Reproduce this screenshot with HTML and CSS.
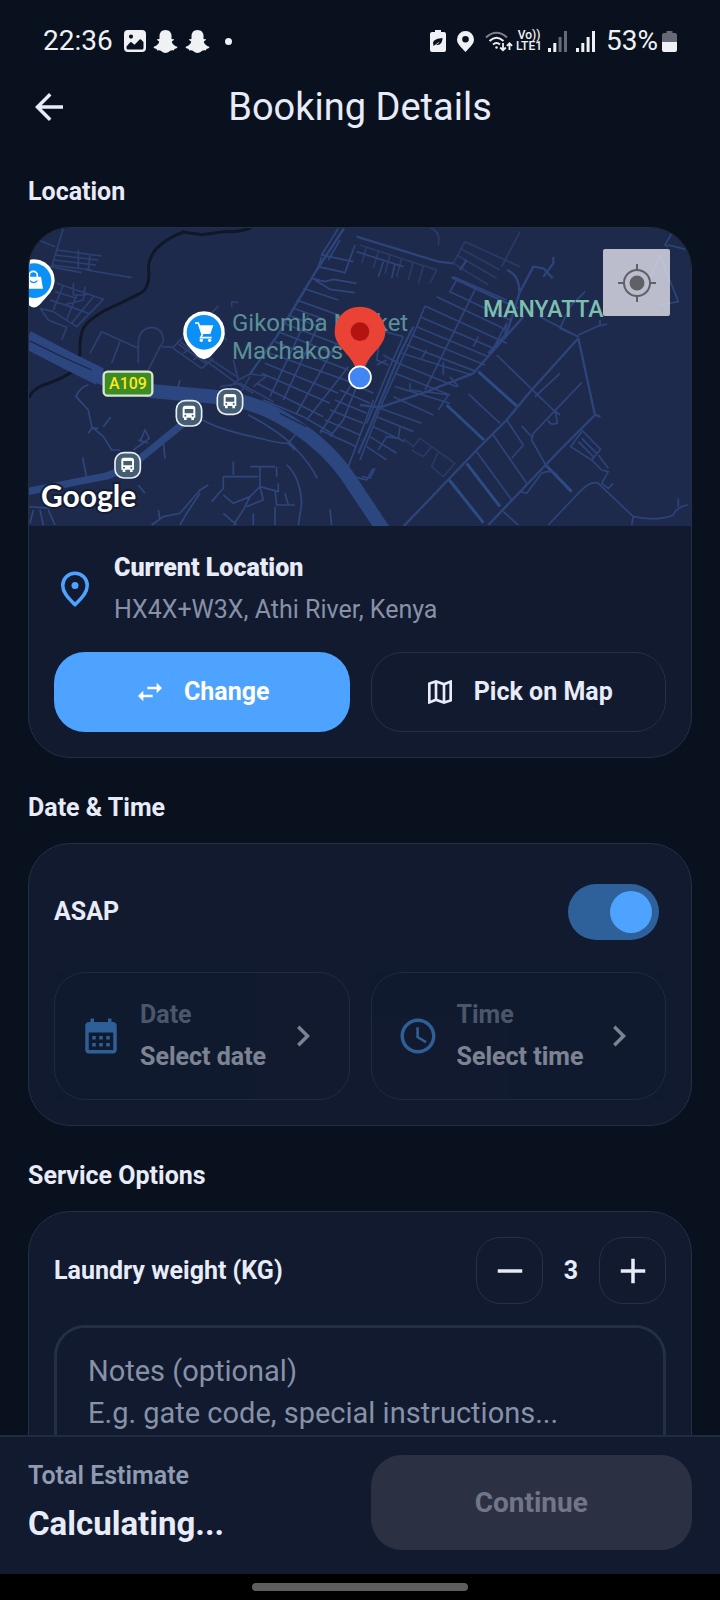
FILE: index.html
```html
<!DOCTYPE html>
<html lang="en">
<head>
<meta charset="utf-8">
<meta name="viewport" content="width=device-width, initial-scale=1">
<title>Booking Details</title>
<link rel="stylesheet" href="styles.css">
</head>
<body>
<div class="app">
  <div class="status">
    <div class="status-group">
      <span class="clock">22:36</span>
      <svg class="ic-photo" width="22" height="22" viewBox="0 0 22 22"><path fill-rule="evenodd" fill="currentColor" d="M4 0h14a4 4 0 0 1 4 4v14a4 4 0 0 1-4 4H4a4 4 0 0 1-4-4V4a4 4 0 0 1 4-4zM7 4.500a2 2 0 1 0 0 4.200a2 2 0 0 0 0-4.200zM2.500 16.500v1.500q0 1.500 1.500 1.500h14q1.500 0 1.500-1.500v-6l-2.500-2.500q-.7-.6-1.400 0l-5.100 5.200-3-2.400q-.8-.5-1.500.2z"/></svg>
      <svg class="ic-ghost" width="25" height="23" viewBox="0 0 25 23"><path fill="currentColor" d="M12.500 0C16.500 0 18.500 2.800 18.500 6v3c.8.400 2-.3 2.300.5.300.9-1.800 1.300-2 2.200 0 1.500 2.500 4 4.900 4.800 1 .4.900 1.300-.1 1.800-1 .5-2 .4-2.400 1.100-.3.800-.3 1-1.200 1-1.300-.1-2.400 0-3.500.9-2.500 2.100-5.500 2.100-8 0-1.100-.9-2.200-1-3.500-.9-.9 0-.9-.2-1.200-1-.4-.7-1.400-.6-2.400-1.100-1-.5-1.100-1.400-.1-1.800 2.400-.8 4.900-3.300 4.900-4.800-.2-.9-2.300-1.300-2-2.200.300-.8 1.500-.1 2.300-.5V6c0-3.200 2-6 6-6z"/></svg>
      <svg class="ic-ghost" width="25" height="23" viewBox="0 0 25 23"><path fill="currentColor" d="M12.500 0C16.500 0 18.500 2.800 18.500 6v3c.8.400 2-.3 2.300.5.300.9-1.800 1.300-2 2.200 0 1.500 2.500 4 4.900 4.800 1 .4.900 1.300-.1 1.800-1 .5-2 .4-2.400 1.100-.3.800-.3 1-1.200 1-1.300-.1-2.400 0-3.500.9-2.500 2.100-5.500 2.100-8 0-1.100-.9-2.200-1-3.500-.9-.9 0-.9-.2-1.200-1-.4-.7-1.400-.6-2.400-1.100-1-.5-1.100-1.400-.1-1.800 2.400-.8 4.900-3.300 4.900-4.800-.2-.9-2.300-1.300-2-2.200.300-.8 1.500-.1 2.300-.5V6c0-3.200 2-6 6-6z"/></svg>
      <span class="more-dot"></span>
    </div>
    <div class="status-group status-right">
      <svg width="16" height="22" viewBox="0 0 16 22"><path fill="currentColor" d="M5 0h6v2h3q2 0 2 2v16q0 2-2 2H2q-2 0-2-2V4q0-2 2-2h3z"/><path fill="#0a111e" d="M3 12.500c1-3 5-4 9.500-4.500 0 5-3 8-6.500 6.500 1.500-.5 3-1.500 3.500-3-1.500 1.500-3.500 2.500-6 4.500z"/></svg>
      <svg class="ic-pin" width="17" height="21" viewBox="0 0 17 21"><path fill="currentColor" fill-rule="evenodd" d="M8.500 0A8.500 8.500 0 0 1 17 8.500C17 13 13 16 8.500 21 4 16 0 13 0 8.500A8.500 8.500 0 0 1 8.500 0zM8.500 5a3.300 3.300 0 1 0 0 6.600a3.300 3.300 0 0 0 0-6.600z"/></svg>
      <svg class="ic-wifi" width="28" height="21" viewBox="0 0 28 21" fill="none" stroke="currentColor" stroke-width="2"><path opacity=".5" d="M1 6.500Q11.500-3 22 6.500"/><path d="M4.500 10Q11.500 3.500 18.500 10M8 13.500q3.500-3 7 0"/><circle cx="11.500" cy="16.500" r="1.200" fill="currentColor" stroke="none"/><path stroke-width="1.800" d="M18 12v7m-2.800-2.500L18 19.300l2.800-2.800M24.500 19v-6.500m-2.600 2.300l2.600-2.600 2.600 2.600"/></svg>
      <span class="volte"><span>Vo))</span><span>LTE1</span></span>
      <svg class="ic-sig" width="19" height="21" viewBox="0 0 19 21" fill="currentColor"><path d="M0 17h3v4H0zM5.300 12h3v9h-3z"/><path opacity=".4" d="M10.600 6h3v15h-3zM16 0h3v21h-3z"/></svg>
      <svg class="ic-sig2" width="19" height="21" viewBox="0 0 19 21" fill="currentColor"><path d="M0 17h3v4H0zM5.300 12h3v9h-3zM10.600 6h3v15h-3zM16 0h3v21h-3z"/></svg>
      <span class="clock">53%</span>
      <svg class="ic-bat" width="15" height="21" viewBox="0 0 15 21"><path opacity=".4" fill="currentColor" d="M4.500 0h6v2H13q2 0 2 2v7H0V4q0-2 2-2h2.500z"/><path fill="currentColor" d="M0 11h15v8q0 2-2 2H2q-2 0-2-2z"/></svg>
    </div>
  </div>

  <header class="topbar">
    <button class="icon-btn" type="button" aria-label="Back"><svg class="i42" viewBox="0 0 24 24" fill="currentColor"><path d="M20 11H7.830l5.590-5.590L12 4l-8 8 8 8 1.410-1.410L7.830 13H20v-2z"/></svg></button>
    <h1>Booking Details</h1>
  </header>

  <main class="content">
    <section>
      <h2>Location</h2>
      <div class="card">
        <div class="map">
          <svg class="map-art" viewBox="0 0 662 298" role="img" aria-label="Map around Athi River">
            <defs>
              <g id="bus">
                <rect x="-38" y="-38" width="76" height="76" rx="27" fill="#465e74" stroke="#e9eef2" stroke-width="5"/>
                <path fill="#fff" fill-rule="evenodd" d="M-11-23h22q8 0 8 8v28h-4v7h-8v-7H-7v7h-8v-7h-4v-28q0-8 8-8zM-13-13v13h26v-13zM-11 4a3 3 0 1 0 0 6a3 3 0 0 0 0-6zM11 4a3 3 0 1 0 0 6a3 3 0 0 0 0-6z"/>
              </g>
            </defs>
            <rect width="662" height="298" fill="#1d2a4c"/>
            <g transform="translate(-9 -8) scale(.3333)" fill="none" stroke-linejoin="round">
              <g stroke="#2b4071" stroke-width="5">
                <path d="M20 45L105 80M130 25L95 140M110 90L245 108M105 105L235 120M100 120L228 135M95 135L215 150M175 90V145M210 105L205 148M90 140L185 158M200 150L335 173"/>
                <path d="M110 190L250 238L170 320L100 275L60 265M130 195L100 270M160 190V225L200 225M195 200L190 240L130 255M90 240L150 260L205 280M170 225L140 300M220 230L155 310M105 215L170 235M60 265L85 300L140 322L125 360"/>
                <path d="M245 335L210 400M245 335L355 385M300 365L275 430M355 430V365Q360 325 395 322Q430 325 430 365L420 380L385 450M425 380L460 382L480 360L540 315L595 258M635 262V245L655 248"/>
                <path d="M460 385L545 445L580 415M475 372L560 432M490 400L510 385M520 420L540 405M480 365L650 490L700 520M560 410L650 470M600 340L620 360"/>
                <path d="M640 420L655 480L630 500M655 480L690 462L740 468L700 500M660 520L690 470M600 500L660 490L760 545"/>
              </g>
              <g stroke="#2e467c" stroke-width="5">
                <path stroke-width="7" d="M972 25L890 150L770 350L690 462"/>
                <path d="M955 25L905 105L1000 125"/>
                <path d="M905 110L895 140L975 158L1005 75M925 120L960 60M875 175L915 185L940 178L1010 190M885 180L930 208L1005 218M850 205L955 240M830 240L1010 305M820 265L905 295M805 285L900 322M790 310L960 375M775 335L940 400M765 365L985 450M750 400L975 480M735 430L955 520M725 460L930 550M710 490L910 590"/>
                <path d="M865 285L750 530M905 295L790 540M950 370L830 580M985 440L860 600M1010 470L900 640M730 540L850 590L935 640"/>
                <path d="M975 480L1060 520M960 510L1050 550M945 540L1040 580M930 570L1030 610M915 600L1020 645M900 630L1010 680"/>
                <path d="M1060 380L1010 500L970 600L930 650M1060 540L1000 700L985 740"/>
                <path d="M548 600Q600 630 720 655Q780 672 805 670L830 640M685 585Q790 640 830 690Q870 730 892 775M805 670L825 690"/>
                <path d="M480 480L472 510M205 495Q180 500 168 530L205 570L215 620L250 650L275 690L300 690M205 640L215 625L235 625M250 620L272 592M355 660L385 670M360 665L375 630L388 655L340 690M430 665L435 715M188 712L200 775M355 795L375 820"/>
                <path d="M20 860L100 865M60 870L70 915M85 870L105 915M40 870L30 910"/>
                <path d="M395 915L430 890L480 880L540 810L565 795M415 870L420 900M540 820L500 880L480 915M575 845L610 805V770H715M640 725V765M690 740H765M720 740V800L775 815V790M770 740V770M720 800L690 830L670 870L640 915M690 830L640 850L610 825M680 860L730 840L720 800M610 880L650 915M765 810L770 855H825M765 860V915M700 880V915M800 735Q840 770 845 850L835 915M795 820L805 855M930 868L935 915M1000 770L1040 780L1060 745"/>
              </g>
              <path stroke="#101828" stroke-width="9" stroke-linecap="round" d="M690 25Q650 38 620 34L545 44L490 36Q440 55 410 85Q380 120 387 160Q388 200 365 218L290 255Q210 290 190 325Q178 350 180 400L165 450Q120 480 70 495Q40 508 28 530"/>
              <path stroke="#2c467f" stroke-width="22" d="M500 602L370 708Q330 745 260 768L20 815"/>
              <path stroke="#2c467f" stroke-width="54" d="M20 358L150 425L240 470"/>
              <path stroke="#2c467f" stroke-width="42" d="M200 452Q290 500 400 514L560 528Q690 538 780 590Q910 665 980 765L1090 930"/>
              <path stroke="#1b294c" stroke-width="4" d="M28 362L130 412L215 450M780 580L860 620"/>
            </g>
            <g transform="translate(331 -8) scale(.3333)" fill="none" stroke="#2d447a" stroke-width="5" stroke-linejoin="round">
              <path stroke-width="7" d="M-10 50L235 125L280 130"/>
              <path stroke="#283b68" d="M0 75L230 150M20 80L5 130M55 95L40 145M90 105L75 160M125 115L110 170M160 125L145 180M190 140L175 190M230 150L210 190M200 20Q245 30 235 75"/>
              <path d="M70 125L55 170M105 130L95 175M-10 95L130 140"/>
              <path stroke="#283b68" d="M315 65L480 140M315 65L280 130L385 195M300 85L420 150M290 105L410 175M480 35L425 140"/>
              <path stroke-width="7" d="M275 172L475 265M320 120L300 150"/>
              <path d="M290 180L270 215L450 300M345 210L195 510M280 170L440 240M195 258L440 370M230 230L420 320L450 340M180 290L400 385M170 320L385 410M155 345L375 435M140 375L350 455M125 400L335 465M115 430L290 500M105 460L270 525M195 258L170 320L60 565L0 720"/>
              <path stroke-width="7" d="M160 320L120 400L30 620L-5 700"/>
              <path d="M130 350L90 440L20 610M55 330L130 350M60 345L50 420L85 435M70 405L115 430M50 435L80 420M400 385L440 310L435 345M200 390L185 415M355 350L340 380M250 425V465M150 490V510L185 515M270 470L295 500"/>
              <path stroke-width="7" d="M440 150Q480 165 478 220L520 140L550 145L578 175M550 170L580 130V110M478 220L440 340L385 400M490 290L340 460L200 515L60 562L0 555"/>
              <path d="M540 290L655 350L600 325L630 260L675 215M655 345L715 318L742 312M720 300V318"/>
              <path stroke-width="7" d="M655 355L515 510L440 600L350 690L130 920M655 355L705 585L600 690L385 915M705 585L722 590"/>
              <path d="M410 405L580 570L600 585M600 460L525 530M665 488L520 640L515 660L560 740M565 600Q570 620 592 608L585 570M325 522L420 610M440 600L490 675L455 715M485 618L515 650M400 645L500 790"/>
              <path stroke="#2b4c85" stroke-width="9" d="M355 455L470 558M260 555L372 660M320 730L420 860M268 780L370 908M560 738L635 815"/>
              <path d="M350 695L455 840M480 815L500 820L545 760Q580 745 595 770M430 875L475 915M665 630L722 688L695 720L632 680L665 635M665 655L710 700M655 665L700 710M695 720L725 750L745 755L725 790L745 805L760 790M715 705L745 745M565 915L650 825Q690 780 715 790L820 890L815 915M820 890Q890 905 940 885Q950 860 985 855M955 835V860"/>
              <path d="M105 500L270 550M100 530L220 585M60 565L185 610M50 590L160 635M40 620L135 665M30 650L110 700M20 680L80 720M120 620L115 655L80 650L55 690M265 525L235 570M200 515L265 525"/>
              <path stroke="#273a66" d="M130 655L160 680L180 655L215 680L190 710L155 690M215 680L285 730L250 770L215 740L235 695L285 730"/>
              <path d="M925 80L915 75L935 40M925 75L985 90M900 105L860 200M900 105L955 245L900 255M5 770L30 775L45 745"/>
            </g>
            <g class="map-label">
              <text x="203" y="103" font-size="24">Gikomba Market</text>
              <text x="203" y="131" font-size="24">Machakos</text>
              <text class="district" x="454" y="89" font-size="23">MANYATTA</text>
            </g>
            <g transform="translate(-9 -8) scale(.3333)">
              <path fill="#fff" d="M42 118a62 62 0 0 1 48 101L60 253Q42 272 24 253L-6 219A62 62 0 0 1 42 118z"/>
              <circle cx="42" cy="182" r="52" fill="#0b91f5"/>
              <path fill="#fff" d="M18 170h45l6 36H12z"/><path d="M28 172v-6a12 12 0 0 1 24 0v6" fill="none" stroke="#fff" stroke-width="5"/><path d="M30 182q11 12 22 0" fill="none" stroke="#0b91f5" stroke-width="4"/>
              <path fill="#fff" d="M552 274a63 63 0 0 1 50 101L572 409Q552 426 532 409L502 375A63 63 0 0 1 552 274z"/>
              <circle cx="552" cy="337" r="52" fill="#0b91f5"/>
              <path fill="#fff" d="M538 316h42l-9 26h-27z"/><path d="M525 309h10l12 35-5 9h33" fill="none" stroke="#fff" stroke-width="5"/><circle cx="544" cy="361" r="5" fill="#fff"/><circle cx="569" cy="361" r="5" fill="#fff"/>
              <use href="#bus" x="507" y="580"/><use href="#bus" x="630" y="545"/><use href="#bus" x="323" y="736"/>
              <rect x="251" y="455" width="146" height="72" rx="12" fill="#3d8b24" stroke="#d9e6cf" stroke-width="7"/>
              <path fill="#ea4335" d="M1020 260a76 76 0 0 1 76 76c0 45-52 66-65 114h-22c-13-48-65-69-65-114a76 76 0 0 1 76-76z"/>
              <circle cx="1020" cy="335" r="28" fill="#b31412"/>
              <circle cx="1020" cy="472" r="33" fill="#4285f4" stroke="#fff" stroke-width="5"/>
            </g>
            <text class="shield" x="99" y="161" font-size="16" text-anchor="middle">A109</text>
            <text class="brand" x="12" y="279" font-size="30">Google</text>
          </svg>
          <button class="locate" type="button" aria-label="My location">
            <svg viewBox="0 0 38 38" fill="none" stroke="#5f6166" stroke-width="2"><circle cx="19" cy="19" r="13"/><circle cx="19" cy="19" r="6.500" fill="#5f6166"/><path d="M19 0v6M19 32v6M0 19h6M32 19h6"/></svg>
          </button>
        </div>
        <div class="place">
          <div class="place-row">
            <svg class="i42 accent" viewBox="0 0 24 24" fill="none" stroke="currentColor" stroke-width="2"><path stroke-linejoin="round" d="M12 21C9 17.800 5 14.500 5 10a7 7 0 0 1 14 0c0 4.500-4 7.800-7 11z"/><circle cx="12" cy="10" r="2" fill="currentColor" stroke="none"/></svg>
            <div class="stack">
              <strong>Current Location</strong>
              <span class="address">HX4X+W3X, Athi River, Kenya</span>
            </div>
          </div>
          <div class="pair">
            <button class="btn primary" type="button"><svg class="i32" viewBox="0 0 24 24" fill="currentColor"><path d="M6.990 11L3 15l3.990 4v-3H14v-2H6.990v-3zM21 9l-3.990-4v3H10v2h7.010v3L21 9z"/></svg>Change</button>
            <button class="btn outline" type="button"><svg class="i32" viewBox="0 0 24 24" fill="currentColor"><path d="M20.500 3l-.16.030L15 5.100 9 3 3.360 4.900c-.21.070-.36.250-.36.480V20.500c0 .28.220.5.500.5l.16-.030L9 18.900l6 2.100 5.640-1.900c.21-.070.360-.250.360-.480V3.500c0-.28-.22-.5-.5-.5zM10 5.470l4 1.400v11.660l-4-1.400V5.470zm-5 .99l3-1.010v11.700l-3 1.160V6.460zm14 11.080l-3 1.010V6.860l3-1.160v11.840z"/></svg>Pick on Map</button>
          </div>
        </div>
      </div>
    </section>

    <section>
      <h2>Date &amp; Time</h2>
      <div class="card padded">
        <div class="asap">
          <label for="asap">ASAP</label>
          <input class="switch" type="checkbox" role="switch" id="asap" checked>
        </div>
        <div class="pair">
          <button class="picker" type="button" disabled>
            <svg class="i42 accent" viewBox="0 0 24 24" fill="currentColor"><path d="M19 4h-1V2h-2v2H8V2H6v2H5c-1.110 0-1.990.9-1.990 2L3 20c0 1.100.89 2 2 2h14c1.100 0 2-.9 2-2V6c0-1.100-.9-2-2-2zm0 16H5V10h14v10zM9 14H7v-2h2v2zm4 0h-2v-2h2v2zm4 0h-2v-2h2v2zm-8 4H7v-2h2v2zm4 0h-2v-2h2v2zm4 0h-2v-2h2v2z"/></svg>
            <span class="stack"><span class="muted">Date</span><span>Select date</span></span>
            <svg class="i42" viewBox="0 0 24 24" fill="currentColor"><path d="M10 6L8.590 7.410 13.170 12l-4.580 4.590L10 18l6-6z"/></svg>
          </button>
          <button class="picker" type="button" disabled>
            <svg class="i42 accent" viewBox="0 0 24 24" fill="currentColor"><path d="M11.990 2C6.470 2 2 6.480 2 12s4.470 10 9.990 10C17.520 22 22 17.520 22 12S17.520 2 11.990 2zM12 20c-4.420 0-8-3.580-8-8s3.580-8 8-8 8 3.580 8 8-3.580 8-8 8zm.5-13H11v6l5.250 3.150.75-1.230-4.500-2.670z"/></svg>
            <span class="stack"><span class="muted">Time</span><span>Select time</span></span>
            <svg class="i42" viewBox="0 0 24 24" fill="currentColor"><path d="M10 6L8.590 7.410 13.170 12l-4.580 4.590L10 18l6-6z"/></svg>
          </button>
        </div>
      </div>
    </section>

    <section>
      <h2>Service Options</h2>
      <div class="card padded">
        <div class="weight">
          <span id="weight-label">Laundry weight (KG)</span>
          <div class="stepper" role="group" aria-labelledby="weight-label">
            <button type="button" aria-label="Decrease"><svg class="i42" viewBox="0 0 24 24" fill="currentColor"><path d="M19 13H5v-2h14v2z"/></svg></button>
            <output>3</output>
            <button type="button" aria-label="Increase"><svg class="i42" viewBox="0 0 24 24" fill="currentColor"><path d="M19 13h-6v6h-2v-6H5v-2h6V5h2v6h6v2z"/></svg></button>
          </div>
        </div>
        <div class="notes">
          <label for="notes">Notes (optional)</label>
          <textarea id="notes" rows="3" placeholder="E.g. gate code, special instructions..."></textarea>
        </div>
      </div>
    </section>
  </main>

  <footer class="summary">
    <div class="stack">
      <span class="total-label">Total Estimate</span>
      <span class="total">Calculating...</span>
    </div>
    <button class="continue" type="button" disabled>Continue</button>
  </footer>
  <div class="gesture"><span></span></div>
</div>
</body>
</html>
```
FILE: styles.css
```css
* { box-sizing: border-box; }

body {
  margin: 0;
  background: #0a111e;
  color: #e8ebf8;
  font: 700 25px/28px Roboto, "Liberation Sans", sans-serif;
}

button, textarea { font: inherit; color: inherit; margin: 0; }
button { padding: 0; border: 0; background: none; }
svg { display: block; flex: none; }
h1, h2 { margin: 0; }

.i42 { width: 42px; height: 42px; }
.i32 { width: 32px; height: 32px; }
.accent { color: #4da3ff; }

.app { display: flex; flex-direction: column; height: 100vh; }

/* Status bar */
.status {
  display: flex;
  justify-content: space-between;
  height: 58px;
  padding: 24px 43px 0 43px;
  color: #f0f1f4;
}
.status-group { display: flex; align-items: center; height: 34px; }
.clock { font-size: 28px; font-weight: 400; }
.ic-photo { margin-left: 11px; }
.ic-ghost { margin-left: 7px; }
.more-dot { width: 7px; height: 7px; margin-left: 15px; border-radius: 50%; background: currentColor; }
.ic-pin { margin-left: 11px; }
.ic-wifi { margin-left: 11px; }
.volte { display: flex; flex-direction: column; align-items: center; margin-left: 3px; font-size: 12px; line-height: 11px; font-weight: 500; }
.ic-sig { margin-left: 6px; }
.ic-sig2 { margin: 0 11px 0 9px; }
.ic-bat { margin-left: 4px; }

/* App bar */
.topbar {
  display: grid;
  grid-template-columns: 42px 1fr 42px;
  align-items: center;
  height: 98px;
  padding: 0 28px;
}
.topbar h1 { font-size: 38px; line-height: 48px; font-weight: 400; text-align: center; }

/* Scrolling content */
.content {
  flex: 1;
  min-height: 0;
  display: flex;
  flex-direction: column;
  gap: 36px;
  padding: 22px 28px 42px;
  overflow-y: auto;
  scrollbar-width: none;
}
h2 { margin-bottom: 21px; font-size: 25px; }
.card { border: 1px solid #252f43; border-radius: 42px; background: #111a2e; overflow: hidden; }
.padded { padding: 25px; }
.stack { display: flex; flex-direction: column; gap: 14px; text-align: left; }
.pair { display: grid; grid-template-columns: 1fr 1fr; gap: 21px; }

/* Location */
.map { position: relative; }
.map-art { width: 100%; height: auto; }
.map-label { fill: #5b9096; font-weight: 400; }
.district { fill: #7dbfae; font-weight: 500; }
.shield { fill: #ffe81f; font-weight: 500; }
.brand { fill: #fff; stroke: #141d33; stroke-width: 4px; paint-order: stroke; font-family: Lato, sans-serif; font-weight: 700; }
.locate {
  position: absolute;
  top: 21px;
  right: 21px;
  display: grid;
  place-items: center;
  width: 67px;
  height: 67px;
  border-radius: 2px;
  background: rgba(222, 222, 234, .82);
}
.locate svg { width: 38px; height: 38px; }
.place { padding: 28px 25px 25px; }
.place-row { display: flex; align-items: center; gap: 18px; margin-bottom: 28px; }
.address { font-weight: 400; color: #8791a8; }
.btn { display: flex; align-items: center; justify-content: center; gap: 18px; height: 80px; border-radius: 31px; }
.primary { background: #4da3ff; color: #fff; }
.outline { border: 1px solid #273145; }

/* Date and time */
.asap { display: flex; align-items: center; justify-content: space-between; height: 85px; margin-bottom: 18px; padding-right: 7px; }
.switch {
  appearance: none;
  display: flex;
  width: 91px;
  height: 56px;
  margin: 0;
  padding: 7px;
  border-radius: 28px;
  background: #2a3346;
}
.switch::before { content: ""; width: 42px; height: 42px; border-radius: 50%; background: #8791a8; }
.switch:checked { justify-content: flex-end; background: #2e6099; }
.switch:checked::before { background: #4da3ff; }
.picker {
  display: flex;
  align-items: center;
  gap: 18px;
  padding: 28px 25px;
  border: 1px solid #303b50;
  border-radius: 31px;
  opacity: .5;
}
.picker .stack { flex: 1; white-space: nowrap; }
.muted { color: #8791a8; }
.picker > svg:last-child { margin-left: -18px; }

/* Service options */
.weight { display: flex; align-items: center; justify-content: space-between; margin-bottom: 21px; }
.stepper { display: flex; align-items: center; }
.stepper button { display: grid; place-items: center; width: 67px; height: 67px; border: 1px solid #273145; border-radius: 24px; }
.stepper output { width: 56px; text-align: center; }
.notes { padding: 22px 31px; border: 3px solid #232f45; border-radius: 31px; font-size: 29px; line-height: 42px; font-weight: 400; color: #8791a8; }
.notes label { display: block; }
.notes textarea { display: block; width: 100%; padding: 0; border: 0; background: none; resize: none; outline: 0; }
.notes textarea::placeholder { color: #8791a8; opacity: 1; }

/* Bottom summary */
.summary {
  display: grid;
  grid-template-columns: 1fr 1fr;
  align-items: center;
  gap: 21px;
  padding: 18px 28px 24px;
  border-top: 2px solid #202b3f;
  background: #111a2e;
}
.total-label { font-weight: 600; color: #8f9ab3; }
.total { font-size: 33px; line-height: 40px; }
.continue { height: 95px; border-radius: 31px; background: #2b3143; color: #707686; font-size: 28px; }
.gesture { display: grid; place-items: center; height: 26px; background: #000; }
.gesture span { width: 30%; height: 8px; border-radius: 4px; background: #5e5e5e; }
```
